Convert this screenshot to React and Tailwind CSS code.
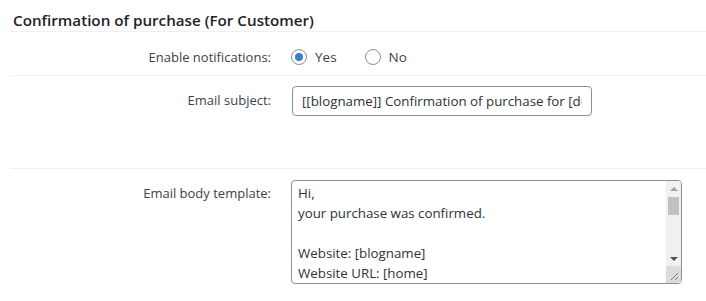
import React, { useState } from 'react';

const body = `Hi,
your purchase was confirmed.

Website: [blogname]
Website URL: [home]
Order ID: [order_id]
Product: [product]
Price: [price]
Date: [date]

Thank you for your purchase!
You can download your files here:
[download_link]

Regards,
[blogname]`;

const Radio = ({ checked, label, onClick }) => (
  <label className="flex items-center cursor-pointer" onClick={onClick}>
    <span className="w-4 h-4 rounded-full border border-[#8c8f94] bg-white flex items-center justify-center">
      {checked && <span className="w-2 h-2 rounded-full bg-[#3582c4]" />}
    </span>
    <span className="ml-2 text-[13.5px] text-[#3c434a]">{label}</span>
  </label>
);

// fake classic scrollbar, the headless browser only draws overlay ones
const ScrollBar = () => (
  <div className="w-[15px] flex flex-col bg-[#f1f1f1]">
    <div className="h-[15px] flex items-center justify-center">
      <div className="w-0 h-0 border-x-[4px] border-x-transparent border-b-[4px] border-b-[#a3a3a3]" />
    </div>
    <div className="flex-1 px-[2px] pt-[1px]">
      <div className="h-[18px] bg-[#c1c1c1]" />
    </div>
    <div className="h-[15px] flex items-center justify-center">
      <div className="w-0 h-0 border-x-[4px] border-x-transparent border-t-[4px] border-t-[#505050]" />
    </div>
    <div className="h-[17px] bg-[#dcdcdc] rounded-br-[3px] flex items-end justify-end">
      <svg width="10" height="10" viewBox="0 0 10 10" className="mb-[2px] mr-[2px]">
        <path d="M9 2 L2 9 M9 6 L6 9" stroke="#7a7a7a" strokeWidth="1" fill="none" />
      </svg>
    </div>
  </div>
);

export default function App() {
  const [enabled, setEnabled] = useState(true);

  return (
    <div className="w-[706px] h-[301px] bg-white overflow-hidden text-[#3c434a]" style={{ fontFamily: '"Open Sans", "Noto Sans", sans-serif' }}>
      <h2 className="pl-[13px] pt-[11px] pb-[1px] text-[15.2px] leading-[19px] font-semibold text-[#1d2327]">
        Confirmation of purchase (For Customer)
      </h2>

      <div className="ml-[10px] border-t border-[#f0f0f1]">
        {/* enable notifications */}
        <div className="flex h-[44px] border-b border-[#f0f0f1]">
          <div className="w-[261px] pt-[15px] text-right text-[13px] leading-[20px]">Enable notifications:</div>
          <div className="pl-[20px] pt-[15px] flex items-center h-[35px] gap-[28px]">
            <Radio checked={enabled} label="Yes" onClick={() => setEnabled(true)} />
            <Radio checked={!enabled} label="No" onClick={() => setEnabled(false)} />
          </div>
        </div>

        {/* email subject */}
        <div className="flex h-[93px] border-b border-[#f0f0f1]">
          <div className="w-[261px] pt-[14px] text-right text-[13px] leading-[20px]">Email subject:</div>
          <div className="pl-[21px] pt-[10px]">
            <input
              type="text"
              defaultValue="[[blogname]] Confirmation of purchase for [dutch_product]"
              className="w-[300px] h-[30px] px-[9px] rounded-[4px] border border-[#8c8f94] text-[13.3px] text-[#2c3338] outline-none"
            />
          </div>
        </div>

        {/* email body */}
        <div className="flex">
          <div className="w-[261px] pt-[14px] text-right text-[13px] leading-[20px]">Email body template:</div>
          <div className="pl-[20px] pt-[11px]">
            <div className="w-[391px] h-[104px] flex rounded-[4px] border border-[#8c8f94] overflow-hidden">
              <textarea
                defaultValue={body}
                className="flex-1 h-full px-[6px] py-[2px] resize-none text-[13.3px] leading-[20px] text-[#2c3338] overflow-hidden outline-none"
              />
              <ScrollBar />
            </div>
          </div>
        </div>
      </div>
    </div>
  );
}
